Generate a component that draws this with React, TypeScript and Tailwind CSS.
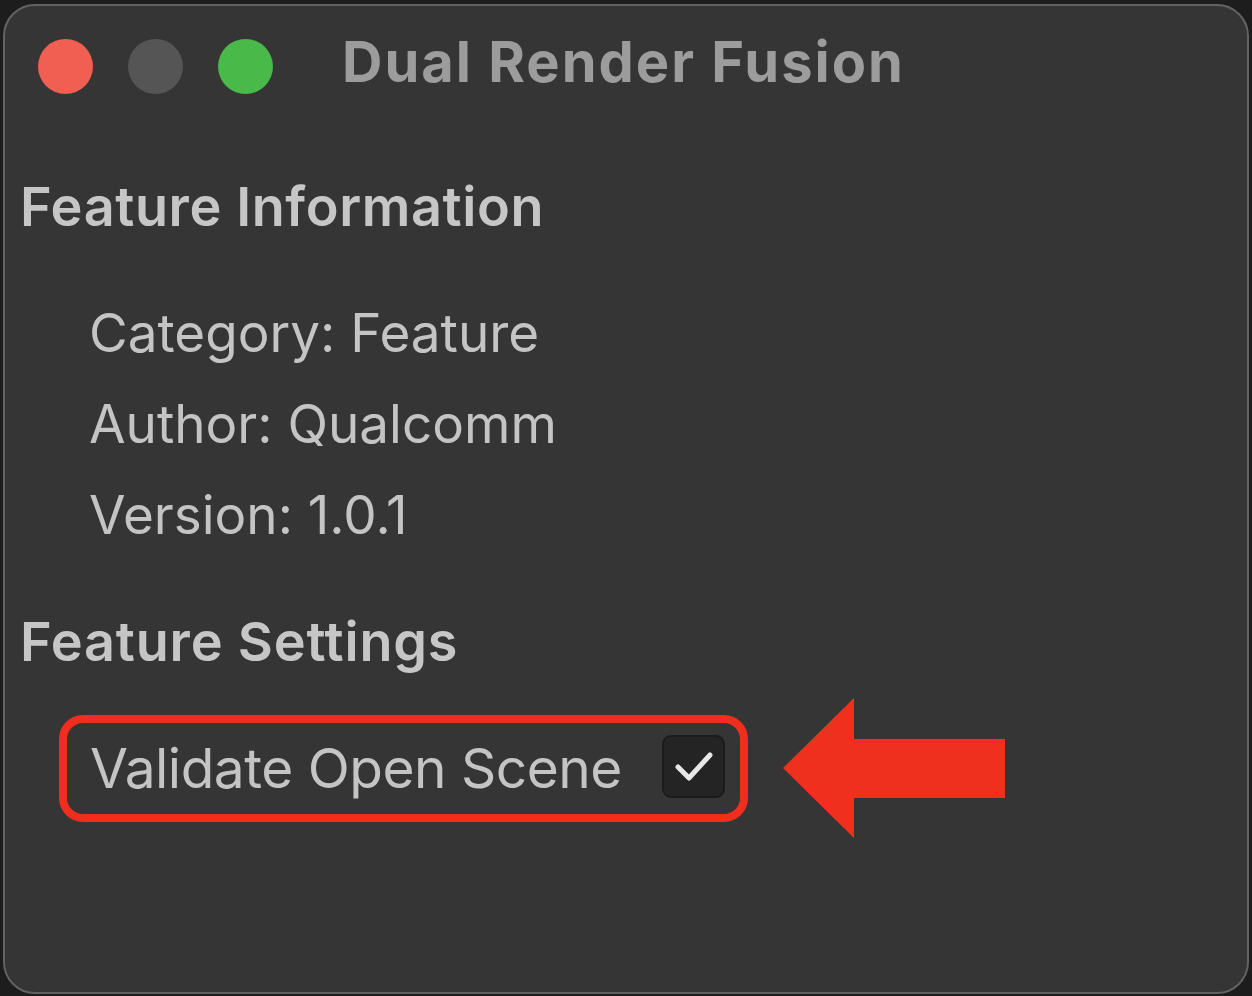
import React, { JSX } from "react";

const font = { fontFamily: "Inter, 'Noto Sans', sans-serif" };

const TrafficLights = (): JSX.Element => (
  <div className="flex gap-[35px]">
    <span className="size-[55px] rounded-full bg-[#f05f52]" />
    <span className="size-[55px] rounded-full bg-[#555555]" />
    <span className="size-[55px] rounded-full bg-[#49b94a]" />
  </div>
);

const ArrowLeft = (): JSX.Element => (
  <svg width="222" height="140" viewBox="0 0 222 140" className="ml-[35px] shrink-0">
    <polygon points="0,70 71,0 71,41 222,41 222,100 71,100 71,140" fill="#f0301f" />
  </svg>
);

export default function App(): JSX.Element {
  const info = ["Category: Feature", "Author: Qualcomm", "Version: 1.0.1"];

  return (
    <div className="w-[1252px] h-[996px] bg-[#1d1d1d] pt-[4px] pl-[3px] overflow-hidden" style={font}>
      <div className="w-[1246px] h-[990px] rounded-[32px] border-2 border-[#626262] bg-[#353535] flex flex-col">
        <div className="flex items-start pl-[33px] pt-[33px]">
          <TrafficLights />
          <h1 className="ml-[69px] -mt-[5px] text-[56px] leading-[56px] font-bold text-[#9c9c9c] tracking-[2px]">
            Dual Render Fusion
          </h1>
        </div>

        <h2 className="mt-[86px] pl-[15px] text-[54px] leading-[54px] font-semibold text-[#c6c6c6] tracking-[0.6px]">
          Feature Information
        </h2>

        <ul className="mt-[54px] pl-[84px] text-[53px] leading-[91px] text-[#c4c4c4]">
          {info.map((line) => (
            <li key={line}>{line}</li>
          ))}
        </ul>

        <h2 className="mt-[54px] pl-[15px] text-[54px] leading-[54px] font-semibold text-[#c6c6c6] tracking-[0.8px]">
          Feature Settings
        </h2>

        <div className="mt-[29px] ml-[54px] flex items-center">
          <div className="w-[689px] h-[107px] rounded-[24px] border-[8px] border-[#ef2e1e] flex items-center justify-between pl-[23px] pr-[15px]">
            <span className="text-[55px] leading-[55px] text-[#c4c4c4] tracking-[-0.5px]">Validate Open Scene</span>
            <span className="size-[63px] rounded-[9px] bg-[#242424] border-2 border-[#1b1b1b] flex items-center justify-center -mt-[3px]">
              <svg width="40" height="34" viewBox="0 0 40 34">
                <polyline
                  points="4,17 15,28 36,5"
                  fill="none"
                  stroke="#e8e8e8"
                  strokeWidth="5"
                  strokeLinecap="round"
                  strokeLinejoin="round"
                />
              </svg>
            </span>
          </div>
          <ArrowLeft />
        </div>
      </div>
    </div>
  );
}
